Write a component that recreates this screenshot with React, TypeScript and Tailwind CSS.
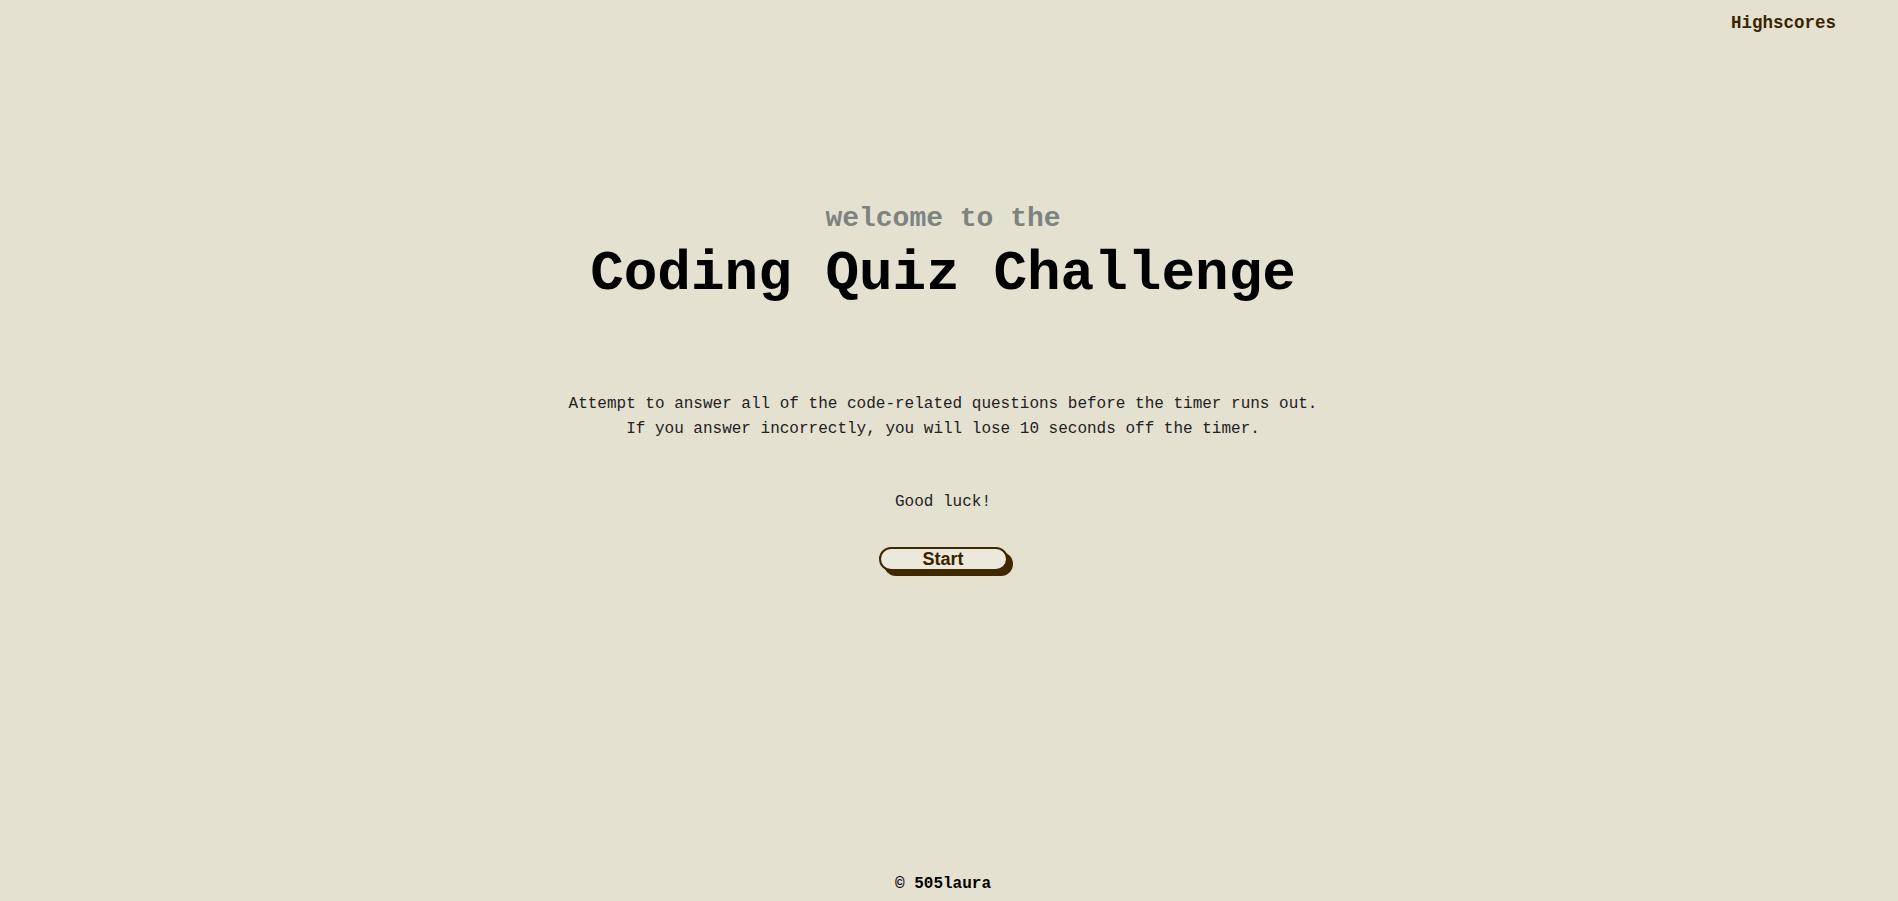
export default function App() {
  const mono = 'font-["Liberation_Mono","Courier_New",monospace]'

  return (
    <div className={`flex min-h-screen flex-col bg-[#e4e1d0] text-black ${mono}`}>
      {/* top bar */}
      <header className="flex justify-end pt-[13px] pr-[62px]">
        <a className="cursor-pointer text-[17.5px] leading-[20px] font-bold text-[#3a2500]">Highscores</a>
      </header>

      {/* intro card */}
      <main className="flex flex-1 flex-col items-center pt-[170px] pr-[12px] text-center">
        <h2 className="text-[28px] leading-[32px] font-bold text-[#7d837f]">welcome to the</h2>
        <h1 className="mt-[8px] text-[56px] leading-[63px] font-bold">Coding Quiz Challenge</h1>

        <p className="mt-[86px] text-[16px] leading-[25px] text-[#222]">
          Attempt to answer all of the code-related questions before the timer runs out.
          <br />
          If you answer incorrectly, you will lose 10 seconds off the timer.
        </p>

        <p className="mt-[48px] text-[16px] leading-[25px] text-[#222]">Good luck!</p>

        <button className='mt-[32px] h-[24px] w-[129px] rounded-full border-2 border-[#3f2700] bg-[#ece8dc] font-["Liberation_Sans",Arial,sans-serif] text-[18px] leading-[18px] font-bold text-[#3a2200] shadow-[5px_5px_0_#3f2700]'>
          Start
        </button>
      </main>

      <footer className="pr-[12px] pb-[8px] text-center text-[16px] leading-[18px] font-bold">© 505laura</footer>
    </div>
  )
}
